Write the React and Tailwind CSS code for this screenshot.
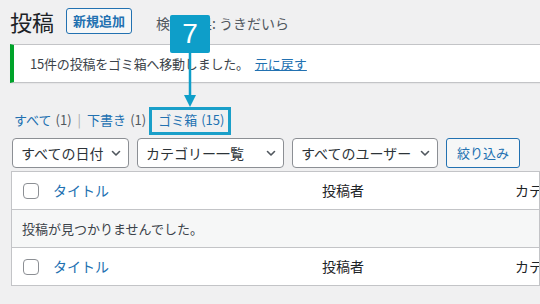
const font = { fontFamily: '"Noto Sans CJK JP", "Noto Sans", sans-serif' };

function Chevron() {
  return (
    <svg className="w-[12px] h-[12px] text-[#50575e]" viewBox="0 0 12 12" fill="none">
      <path d="M2.5 4.5 6 8l3.5-3.5" stroke="currentColor" strokeWidth="1.6" strokeLinecap="round" strokeLinejoin="round" />
    </svg>
  );
}

function Select({ label, width }) {
  return (
    <div className={`${width} h-[30px] bg-white border border-[#8c8f94] rounded-[4px] flex items-center justify-between pl-[8px] pr-[6px] text-[14px] text-[#2c3338]`}>
      <span>{label}</span>
      <Chevron />
    </div>
  );
}

function Row({ bg = 'bg-white', children }) {
  return <div className={`h-[37px] flex items-center ${bg}`}>{children}</div>;
}

function HeadRow() {
  return (
    <Row>
      <div className="w-[41px] shrink-0 pl-[11px]">
        <div className="w-[16px] h-[16px] border border-[#8c8f94] rounded-[4px] bg-white" />
      </div>
      <div className="w-[269px] shrink-0 text-[14px] text-[#2271b1]">タイトル</div>
      <div className="w-[193px] shrink-0 text-[14px] text-[#1d2327]">投稿者</div>
      <div className="shrink-0 text-[14px] text-[#1d2327] whitespace-nowrap">カテゴリー</div>
    </Row>
  );
}

export default function App() {
  return (
    <div className="w-[540px] h-[304px] bg-[#f0f0f1] relative overflow-hidden" style={font}>
      {/* Heading */}
      <div className="pt-[8px] pl-[10px] flex items-center h-[34px]">
        <h1 className="text-[22px] leading-[26px] text-[#1d2327]">投稿</h1>
        <div className="ml-[12px] h-[26px] px-[6px] border border-[#2271b1] rounded-[3px] bg-[#f6f7f7] text-[13px] font-bold text-[#2271b1] flex items-center">新規追加</div>
        <div className="ml-[24px] text-[14px] text-[#50575e] mt-[4px]">検索結果: うきだいら</div>
      </div>

      {/* Notice */}
      <div className="mt-[10px] ml-[10px] h-[39px] bg-white border-l-4 border-[#00a32a] shadow-[0_1px_1px_rgba(0,0,0,0.04)] border-y border-y-[#c3c4c7] flex items-center pl-[16px] text-[13px] text-[#3c434a] overflow-hidden">
        <span className="tracking-[-0.2px] whitespace-nowrap">15件の投稿をゴミ箱へ移動しました。</span>
        <span className="ml-[6px] text-[#2271b1] underline whitespace-nowrap">元に戻す</span>
      </div>

      {/* Status links */}
      <div className="mt-[28px] pl-[14px] flex items-center text-[13px] leading-[18px] text-[#50575e]">
        <span className="text-[#2271b1]">すべて</span><span className="ml-[4px]">(1)</span>
        <span className="mx-[6px] text-[#a7aaad]">|</span>
        <span className="text-[#2271b1]">下書き</span><span className="ml-[4px]">(1)</span>
        <span className="ml-[12px] text-[#2271b1]">ゴミ箱</span><span className="ml-[4px] text-[#2271b1]">(15)</span>
      </div>

      {/* Filters */}
      <div className="mt-[9px] pl-[12px] flex items-center gap-[8px]">
        <Select label="すべての日付" width="w-[117px]" />
        <Select label="カテゴリー一覧" width="w-[147px]" />
        <Select label="すべてのユーザー" width="w-[146px]" />
        <div className="h-[30px] px-[10px] border border-[#2271b1] rounded-[3px] bg-[#f6f7f7] text-[13px] text-[#2271b1] flex items-center">絞り込み</div>
      </div>

      {/* Table */}
      <div className="mt-[3px] ml-[11px] border border-[#c3c4c7] bg-white overflow-hidden">
        <HeadRow />
        <div className="border-t border-[#c3c4c7]">
          <Row bg="bg-[#f6f7f7]">
            <span className="pl-[10px] text-[13px] text-[#3c434a]">投稿が見つかりませんでした。</span>
          </Row>
        </div>
        <div className="border-t border-[#c3c4c7]">
          <HeadRow />
        </div>
      </div>

      {/* Annotation */}
      <div className="absolute left-[170px] top-[15px] w-[40px] h-[38px] bg-[#0e9ec9] rounded-[2px] flex items-center justify-center text-white text-[28px] leading-none" style={{ fontFamily: '"Liberation Sans", sans-serif' }}>7</div>
      <svg className="absolute left-[180px] top-[53px]" width="20" height="55" viewBox="0 0 20 55">
        <line x1="10" y1="0" x2="10" y2="44" stroke="#0e9ec9" strokeWidth="2.5" />
        <path d="M4 42h12l-6 12z" fill="#0e9ec9" />
      </svg>
      <div className="absolute left-[149px] top-[107px] w-[82px] h-[28px] border-[3px] border-[#1a9fc9]" />
    </div>
  );
}
